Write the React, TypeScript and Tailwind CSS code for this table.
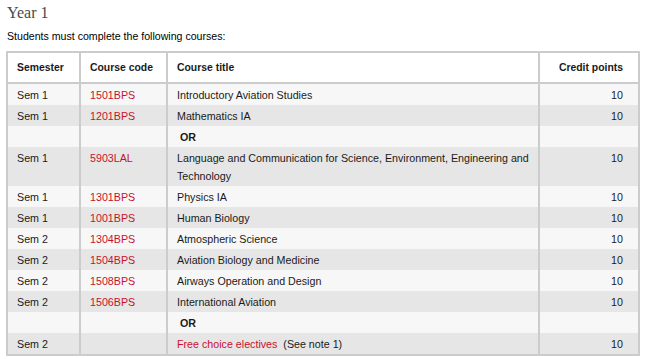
import React from "react";

type Row = {
  sem?: string;
  code?: string;
  title?: React.ReactNode;
  pts?: string;
  or?: boolean;
};

const rows: Row[] = [
  { sem: "Sem 1", code: "1501BPS", title: "Introductory Aviation Studies", pts: "10" },
  { sem: "Sem 1", code: "1201BPS", title: "Mathematics IA", pts: "10" },
  { or: true },
  {
    sem: "Sem 1",
    code: "5903LAL",
    title: "Language and Communication for Science, Environment, Engineering and Technology",
    pts: "10",
  },
  { sem: "Sem 1", code: "1301BPS", title: "Physics IA", pts: "10" },
  { sem: "Sem 1", code: "1001BPS", title: "Human Biology", pts: "10" },
  { sem: "Sem 2", code: "1304BPS", title: "Atmospheric Science", pts: "10" },
  { sem: "Sem 2", code: "1504BPS", title: "Aviation Biology and Medicine", pts: "10" },
  { sem: "Sem 2", code: "1508BPS", title: "Airways Operation and Design", pts: "10" },
  { sem: "Sem 2", code: "1506BPS", title: "International Aviation", pts: "10" },
  { or: true },
  {
    sem: "Sem 2",
    title: (
      <>
        <span className="text-[#c8102e]">Free choice electives</span>
        <span>{"\u00a0 (See note 1)"}</span>
      </>
    ),
    pts: "10",
  },
];

const td = "border-x-2 border-[#cccccc] align-top py-[1.5px] leading-[18px]";

export default function App() {
  return (
    <div
      className="w-[646px] h-[359px] bg-white overflow-hidden text-[#1a1a1a]"
      style={{ fontFamily: '"Liberation Sans", Arial, sans-serif' }}
    >
      <div className="pl-[7px] pt-[3px]">
        <h2
          className="text-[16px] leading-[20px] text-[#4a4a4a]"
          style={{ fontFamily: '"Liberation Serif", "Times New Roman", serif' }}
        >
          Year 1
        </h2>
        <p className="text-[10.6px] leading-[14px] mt-[6px] text-black">
          Students must complete the following courses:
        </p>
      </div>
      <table className="ml-[6px] mt-[8px] w-[632px] border-collapse border-2 border-[#cccccc] text-[10.7px] table-fixed">
        <colgroup>
          <col className="w-[73px]" />
          <col className="w-[87px]" />
          <col className="w-[372px]" />
          <col className="w-[100px]" />
        </colgroup>
        <thead>
          <tr className="bg-white h-[31px] border-b-2 border-[#cccccc]">
            <th className="border-x-2 border-[#cccccc] text-left font-bold pl-[9px] text-[10.4px]">Semester</th>
            <th className="border-x-2 border-[#cccccc] text-left font-bold pl-[9px] text-[10.4px]">Course code</th>
            <th className="border-x-2 border-[#cccccc] text-left font-bold pl-[9px] text-[10.4px]">Course title</th>
            <th className="border-x-2 border-[#cccccc] text-right font-bold pr-[15px] text-[10.4px]">Credit points</th>
          </tr>
        </thead>
        <tbody>
          {rows.map((r, i) => (
            <tr key={i} className={i % 2 === 0 ? "bg-[#f7f7f7]" : "bg-[#e6e6e6]"}>
              <td className={`${td} pl-[9px]`}>{r.sem ?? ""}</td>
              <td className={`${td} pl-[9px] text-[#c8102e]`}>{r.code ?? ""}</td>
              <td className={`${td} pl-[9px] pr-[4px]`}>
                {r.or ? <span className="font-bold pl-[3px]">OR</span> : r.title}
              </td>
              <td className={`${td} text-right pr-[15px]`}>{r.pts ?? ""}</td>
            </tr>
          ))}
        </tbody>
      </table>
    </div>
  );
}
